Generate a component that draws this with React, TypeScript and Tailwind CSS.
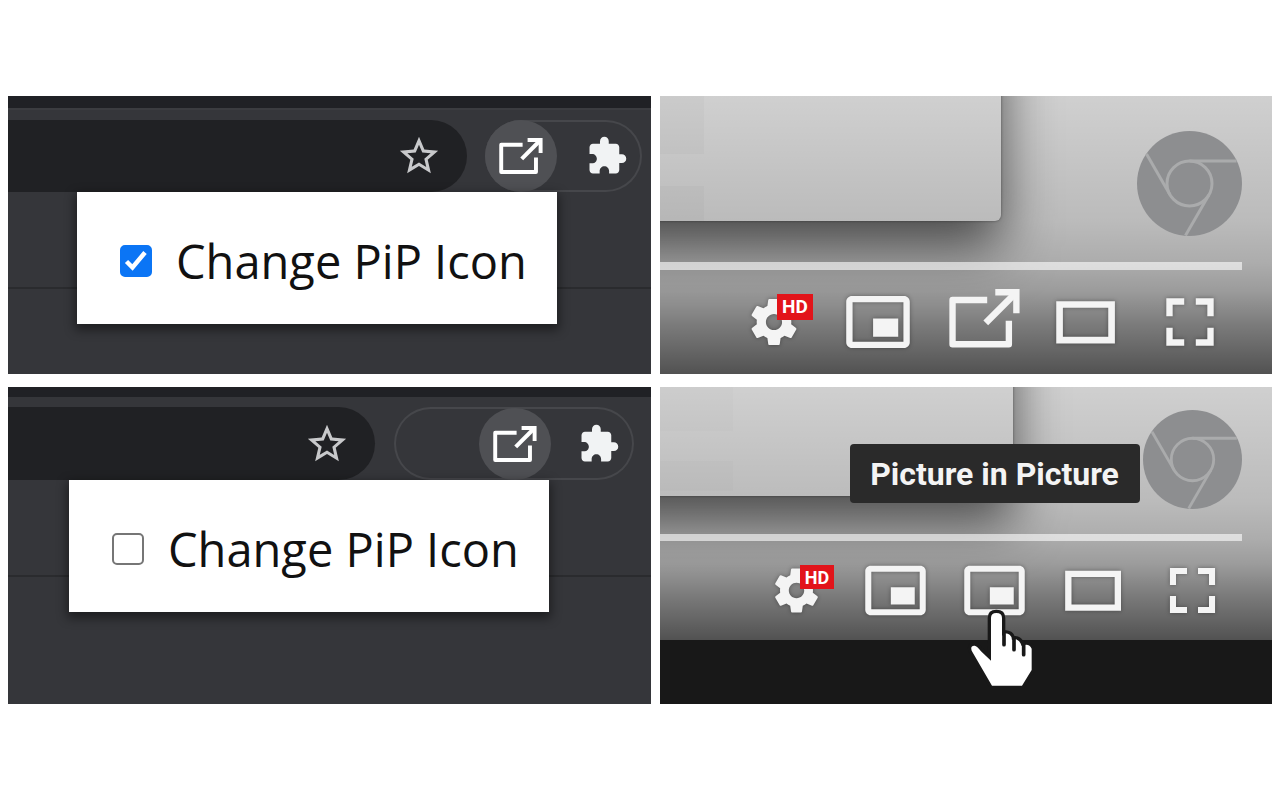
import { MdExtension, MdStarBorder } from "react-icons/md";

function OpenGlyph() {
  return (
    <g fill="none" stroke="currentColor" strokeWidth="2.2">
      <path d="M19.8 10.4H7.8V25.7H27.3V17.6" strokeLinejoin="round" />
      <path d="M19.3 18.3 29.6 8" strokeWidth="2.3" />
      <path d="M22.6 7.7H29.9V15" />
    </g>
  );
}

function OptionPopup({ id, checked, place }: { id: string; checked: boolean; place: string }) {
  return (
    <div className={`absolute flex h-[132px] w-[480px] items-center gap-6 bg-white pt-[5px] pl-[43px] shadow-[0_4px_10px_2px_rgba(0,0,0,0.45)] ${place}`}>
      <span className="grid size-8 shrink-0 place-items-center">
        <input
          id={id}
          type="checkbox"
          defaultChecked={checked}
          className="peer col-start-1 row-start-1 size-8 appearance-none rounded-[5px] border-2 border-[#767676] bg-white checked:border-[#0b75f5] checked:bg-[#0b75f5]"
        />
        <svg viewBox="0 0 32 32" className="pointer-events-none col-start-1 row-start-1 hidden size-8 peer-checked:block" aria-hidden="true">
          <path d="M6.500 16.500 12.500 22.500 25 7.500" fill="none" stroke="#fff" strokeWidth="4.500" />
        </svg>
      </span>
      <label htmlFor={id} className="font-['Open_Sans',sans-serif] text-[47px] leading-[60px] whitespace-nowrap text-[#111]">
        Change PiP Icon
      </label>
    </div>
  );
}

function ToolbarIcons() {
  return (
    <>
      <button type="button" aria-label="Change PiP Icon" className="grid size-[72px] place-items-center rounded-full bg-[#4f5054]">
        <svg viewBox="6.7 6.6 24.4 20.2" className="h-9 w-11" aria-hidden="true">
          <OpenGlyph />
        </svg>
      </button>
      <button type="button" aria-label="Extensions" className="grid size-12 place-items-center text-[#f1f3f4]">
        <MdExtension className="size-[42px]" />
      </button>
    </>
  );
}

function BrowserTop() {
  return (
    <section className="relative overflow-hidden bg-[#35363a] text-white">
      <div className="h-3 bg-[#202125]" />
      <div className="flex h-[84px] items-end justify-between border-t-2 border-[#3b3c40] pr-[9px]">
        <div className="mr-[18px] flex h-[72px] flex-1 items-center justify-end rounded-r-full bg-[#202124] pr-[25px]">
          <button type="button" aria-label="Bookmark" className="text-[#c8c9cb]">
            <MdStarBorder className="size-[46px]" />
          </button>
        </div>
        <div className="flex h-[72px] w-[157px] items-center justify-between rounded-full pr-[11px] shadow-[inset_0_0_0_2px_#46474b]">
          <ToolbarIcons />
        </div>
      </div>
      <div className="h-[97px] border-b-2 border-[#2a2b2e]" />
      <div className="h-[85px]" />
      <OptionPopup id="pip-on" checked place="top-24 right-[94px]" />
    </section>
  );
}

function BrowserBottom() {
  return (
    <section className="relative overflow-hidden bg-[#35363a] text-white">
      <div className="h-[10px] bg-[#202125]" />
      <div className="flex h-[83px] items-end justify-between pr-[17px]">
        <div className="mr-[19px] flex h-[73px] flex-1 items-center justify-end rounded-r-full bg-[#202124] pr-[25px]">
          <button type="button" aria-label="Bookmark" className="text-[#c8c9cb]">
            <MdStarBorder className="size-[46px]" />
          </button>
        </div>
        <div className="flex h-[73px] w-[240px] items-center justify-end gap-6 rounded-full pr-[11px] shadow-[inset_0_0_0_2px_#46474b]">
          <ToolbarIcons />
        </div>
      </div>
      <div className="h-[97px] border-b-2 border-[#2a2b2e]" />
      <div className="h-[127px]" />
      <OptionPopup id="pip-off" checked={false} place="top-[93px] right-[102px]" />
    </section>
  );
}

function ChromeMark({ className }: { className: string }) {
  return (
    <svg viewBox="-52.5 -52.5 105 105" className={className} aria-hidden="true">
      <circle r="52.5" fill="#8d8e90" />
      <g fill="none" stroke="#aaabac" strokeWidth="3">
        <circle r="22.5" />
        <path d="M0-22.500H47" />
        <path d="M0-22.500H47" transform="rotate(120)" />
        <path d="M0-22.500H47" transform="rotate(240)" />
      </g>
    </svg>
  );
}

const gear =
  "m 23.94,18.78 c .03,-0.25 .05,-0.51 .05,-0.78 0,-0.27 -0.02,-0.52 -0.05,-0.78 l 1.68,-1.32 c .15,-0.12 .19,-0.33 .09,-0.51 l -1.6,-2.76 c -0.09,-0.17 -0.31,-0.24 -0.48,-0.17 l -1.99,.8 c -0.41,-0.32 -0.86,-0.58 -1.35,-0.78 l -0.30,-2.12 c -0.02,-0.19 -0.19,-0.33 -0.39,-0.33 l -3.2,0 c -0.2,0 -0.36,.14 -0.39,.33 l -0.30,2.12 c -0.48,.2 -0.93,.47 -1.35,.78 l -1.99,-0.8 c -0.18,-0.07 -0.39,0 -0.48,.17 l -1.6,2.76 c -0.10,.17 -0.05,.39 .09,.51 l 1.68,1.32 c -0.03,.25 -0.05,.52 -0.05,.78 0,.26 .02,.52 .05,.78 l -1.68,1.32 c -0.15,.12 -0.19,.33 -0.09,.51 l 1.6,2.76 c .09,.17 .31,.24 .48,.17 l 1.99,-0.8 c .41,.32 .86,.58 1.35,.78 l .30,2.12 c .02,.19 .19,.33 .39,.33 l 3.2,0 c .2,0 .36,-0.14 .39,-0.33 l .30,-2.12 c .48,-0.2 .93,-0.47 1.35,-0.78 l 1.99,.8 c .18,.07 .39,0 .48,-0.17 l 1.6,-2.76 c .09,-0.17 .05,-0.39 -0.09,-0.51 l -1.68,-1.32 0,0 z m -5.94,2.01 c -1.54,0 -2.8,-1.25 -2.8,-2.8 0,-1.54 1.25,-2.8 2.8,-2.8 1.54,0 2.8,1.25 2.8,2.8 0,1.54 -1.25,2.8 -2.8,2.8 l 0,0 z";
const miniplayer =
  "M25,16.800H16.300V23.100H25Z M29,25 V10.980 C29,9.880 28.100,9 27,9 H9 C7.900,9 7,9.880 7,10.980 V25 C7,26.100 7.900,27 9,27 H27 C28.100,27 29,26.100 29,25 Z M26.800,24.800 H9.200 V11.200 H26.800 Z";
const theater = "m 28,10.800 0,14.600 -20.300,0 0,-14.600 z m -18,2.300 15.700,0 0,10 -15.700,0 z";
const fullscreen =
  "M9.800,16 h2.200 v-4 h4 v-2.200 H9.800z M20,9.800 v2.200 h4 v4 h2.200 V9.800z M24,24 h-4 v2.200 h6.200 V20 H24z M12,20 H9.800 v6.200 H16 V24 h-4z";

function ControlIcon({ d }: { d: string }) {
  return (
    <svg viewBox="0 0 36 36" className="size-full drop-shadow-[0_0_2px_rgba(0,0,0,0.35)]" aria-hidden="true">
      <path d={d} fill="#f4f4f4" fillRule="evenodd" />
    </svg>
  );
}

function Hand() {
  return (
    <svg viewBox="620 172 210 240" className="pointer-events-none absolute top-[67px] left-[22px] z-10 h-20 w-[70px]" aria-hidden="true">
      <path
        d="M692 202Q692 187 708 187Q725 187 725 202V256Q734 244 748 252Q754 256 755 268Q776 260 784 286Q806 276 814 294V358L785 405H695L634 300Q629 284 643 285Q650 286 662 302L692 330Z"
        fill="#fff"
        stroke="#181818"
        strokeWidth="20"
        strokeLinejoin="round"
        paintOrder="stroke"
      />
      <path d="M731 250V282M761 264V297M790 278V312" fill="none" stroke="#181818" strokeWidth="11" strokeLinecap="round" />
    </svg>
  );
}

const scrim =
  "absolute inset-0 bg-[linear-gradient(to_bottom,rgba(0,0,0,0.01)_0%,rgba(0,0,0,0.11)_45%,rgba(0,0,0,0.18)_60%,rgba(0,0,0,0.26)_70%,rgba(0,0,0,0.41)_82%,rgba(0,0,0,0.51)_91%,rgba(0,0,0,0.61)_100%)]";

function PlayerTop() {
  return (
    <section className="relative flex flex-col overflow-hidden bg-[#d2d2d2]">
      <div className="absolute -top-20 right-[271px] -left-20 h-[205px] rounded-br-md bg-[#d2d2d2] pt-20 pl-20 shadow-[0_26px_54px_rgba(0,0,0,0.62),0_0_3px_rgba(0,0,0,0.4)]">
        <div className="h-[58px] w-11 bg-black/2" />
        <div className="mt-8 h-[35px] w-11 bg-black/2" />
      </div>
      <div className={scrim} />
      <div className="relative flex flex-1 flex-col justify-between pr-[30px]">
        <div className="flex justify-end pt-[35px]">
          <ChromeMark className="size-[105px]" />
        </div>
        <div>
          <div className="h-2 bg-white/60" />
          <div className="flex justify-end">
            <button type="button" aria-label="Settings" className="relative size-[104px]">
              <ControlIcon d={gear} />
              <span className="absolute top-6 left-[55px] flex h-[26px] w-9 items-center justify-center bg-[#e2141a] font-['Roboto',sans-serif] text-[19px] font-bold text-white">HD</span>
            </button>
            <button type="button" aria-label="Miniplayer" className="size-[104px]">
              <ControlIcon d={miniplayer} />
            </button>
            <button type="button" aria-label="Picture in Picture" className="size-[104px] text-[#f4f4f4]">
              <svg viewBox="0 0 36 36" className="size-full" aria-hidden="true">
                <OpenGlyph />
              </svg>
            </button>
            <button type="button" aria-label="Theater mode" className="size-[104px]">
              <ControlIcon d={theater} />
            </button>
            <button type="button" aria-label="Full screen" className="size-[104px]">
              <ControlIcon d={fullscreen} />
            </button>
          </div>
        </div>
      </div>
    </section>
  );
}

function PlayerBottom() {
  return (
    <section className="relative bg-[#181818]">
      <div className="relative h-[253px] bg-[#d2d2d2]">
        <div className="absolute inset-0 overflow-hidden">
          <div className="absolute -top-20 right-[259px] -left-20 h-[189px] rounded-br-md bg-[#d2d2d2] pt-20 pl-20 shadow-[0_26px_50px_rgba(0,0,0,0.6),0_0_3px_rgba(0,0,0,0.4)]">
            <div className="h-[44px] w-[73px] bg-black/1" />
            <div className="mt-[30px] h-[30px] w-[73px] bg-black/1" />
          </div>
          <div className={scrim} />
        </div>
        <div className="relative flex h-full flex-col justify-between pr-[30px]">
          <div className="flex justify-end pt-[23px]">
            <ChromeMark className="size-[99px]" />
          </div>
          <div>
            <div className="h-[7px] bg-white/60" />
            <div className="flex justify-end">
              <button type="button" aria-label="Settings" className="relative size-[99px]">
                <ControlIcon d={gear} />
                <span className="absolute top-6 left-[53px] flex h-6 w-[34px] items-center justify-center bg-[#e2141a] font-['Roboto',sans-serif] text-[18px] font-bold text-white">HD</span>
              </button>
              <button type="button" aria-label="Miniplayer" className="size-[99px]">
                <ControlIcon d={miniplayer} />
              </button>
              <button type="button" aria-label="Picture in Picture" className="relative size-[99px]">
                <ControlIcon d={miniplayer} />
                <span
                  role="tooltip"
                  className="absolute bottom-[137px] left-1/2 flex h-[59px] w-[290px] -translate-x-1/2 items-center justify-center rounded-[4px] bg-[#2a2a2a] font-['Roboto',sans-serif] text-[32px] font-bold whitespace-nowrap text-[#f4f4f4]"
                >
                  Picture in Picture
                </span>
                <Hand />
              </button>
              <button type="button" aria-label="Theater mode" className="size-[99px]">
                <ControlIcon d={theater} />
              </button>
              <button type="button" aria-label="Full screen" className="size-[99px]">
                <ControlIcon d={fullscreen} />
              </button>
            </div>
          </div>
        </div>
      </div>
    </section>
  );
}

export default function App() {
  return (
    <main className="min-h-screen bg-white">
      <div className="grid grid-cols-[643fr_612fr] gap-x-[9px] gap-y-[13px] px-2 py-24">
        <BrowserTop />
        <PlayerTop />
        <BrowserBottom />
        <PlayerBottom />
      </div>
    </main>
  );
}
